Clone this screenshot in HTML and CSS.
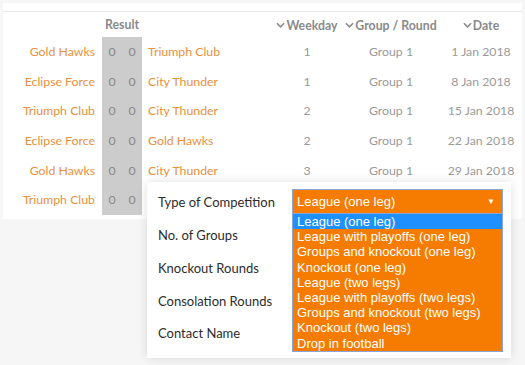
FILE: index.html
```html
<!DOCTYPE html>
<html lang="en">
<head>
    <meta charset="UTF-8">
    <title>Fixtures</title>
    <link rel="stylesheet" href="styles.css">
</head>
<body>
    <div class="card">
        <table class="fixtures">
            <colgroup>
                <col class="col-home">
                <col class="col-score">
                <col class="col-score">
                <col class="col-away">
                <col class="col-week">
                <col class="col-group">
                <col class="col-date">
            </colgroup>
            <thead>
                <tr>
                    <th></th>
                    <th colspan="2" class="result-head">Result</th>
                    <th></th>
                    <th><span class="sort"><svg viewBox="0 0 10 6" class="chev"><path d="M1 1 L5 5 L9 1"/></svg>Weekday</span></th>
                    <th><span class="sort"><svg viewBox="0 0 10 6" class="chev"><path d="M1 1 L5 5 L9 1"/></svg>Group / Round</span></th>
                    <th><span class="sort"><svg viewBox="0 0 10 6" class="chev"><path d="M1 1 L5 5 L9 1"/></svg>Date</span></th>
                </tr>
            </thead>
            <tbody>
                <tr><td class="home">Gold Hawks</td><td class="score">0</td><td class="score">0</td><td class="away">Triumph Club</td><td>1</td><td>Group 1</td><td>1 Jan 2018</td></tr>
                <tr><td class="home">Eclipse Force</td><td class="score">0</td><td class="score">0</td><td class="away">City Thunder</td><td>1</td><td>Group 1</td><td>8 Jan 2018</td></tr>
                <tr><td class="home">Triumph Club</td><td class="score">0</td><td class="score">0</td><td class="away">City Thunder</td><td>2</td><td>Group 1</td><td>15 Jan 2018</td></tr>
                <tr><td class="home">Eclipse Force</td><td class="score">0</td><td class="score">0</td><td class="away">Gold Hawks</td><td>2</td><td>Group 1</td><td>22 Jan 2018</td></tr>
                <tr><td class="home">Gold Hawks</td><td class="score">0</td><td class="score">0</td><td class="away">City Thunder</td><td>3</td><td>Group 1</td><td>29 Jan 2018</td></tr>
                <tr><td class="home">Triumph Club</td><td class="score">0</td><td class="score">0</td><td class="away"></td><td></td><td></td><td></td></tr>
            </tbody>
        </table>
    </div>

    <!-- Competition settings popup -->
    <div class="settings">
        <div class="field">
            <label>Type of Competition</label>
            <div class="select">
                <span>League (one leg)</span>
                <span class="arrow">▼</span>
            </div>
        </div>
        <div class="field"><label>No. of Groups</label></div>
        <div class="field"><label>Knockout Rounds</label></div>
        <div class="field"><label>Consolation Rounds</label></div>
        <div class="field"><label>Contact Name</label></div>

        <ul class="options">
            <li class="active">League (one leg)</li>
            <li>League with playoffs (one leg)</li>
            <li>Groups and knockout (one leg)</li>
            <li>Knockout (one leg)</li>
            <li>League (two legs)</li>
            <li>League with playoffs (two legs)</li>
            <li>Groups and knockout (two legs)</li>
            <li>Knockout (two legs)</li>
            <li>Drop in football</li>
        </ul>
    </div>
</body>
</html>
```

FILE: styles.css
```css
* {
    margin: 0;
    padding: 0;
    box-sizing: border-box;
}

body {
    font-family: Lato, "Noto Sans", sans-serif;
    background-color: #f6f6f6;
    color: #333;
    padding: 3px;
    position: relative;
    height: 365px;
    overflow: hidden;
}

/* Fixtures card */
.card {
    background: white;
    padding: 8px 0 4px;
    width: 519px;
}

.fixtures {
    width: 100%;
    border-collapse: collapse;
    table-layout: fixed;
    border-top: 1px solid #e8e8e8;
    font-size: 12.3px;
}

.col-home { width: 99px; }
.col-score { width: 20px; }
.col-away { width: 130px; }
.col-week { width: 70px; }
.col-group { width: 98px; }
.col-date { width: 82px; }

.fixtures th {
    height: 25px;
    font-weight: 700;
    color: #8a8a8a;
    text-align: center;
    font-size: 12.3px;
}

.sort {
    display: inline-flex;
    align-items: center;
    gap: 1px;
}

.chev {
    width: 9px;
    height: 6px;
    fill: none;
    stroke: #8a8a8a;
    stroke-width: 1.8;
}

.fixtures td {
    height: 29.7px;
    text-align: center;
    color: #9a9a9a;
    white-space: nowrap;
}

.fixtures td.home {
    text-align: right;
    padding-right: 7px;
    color: #e8903c;
}

.fixtures td.away {
    text-align: left;
    padding-left: 6px;
    color: #e8903c;
}

.fixtures td.score {
    background: #cccccc;
    color: #888;
}

/* Settings popup */
.settings {
    position: absolute;
    left: 147px;
    top: 182px;
    width: 364px;
    height: 176px;
    background: white;
    box-shadow: 0 0 10px rgba(0, 0, 0, 0.12);
    padding: 7px 8px 0 11px;
}

.field {
    display: flex;
    align-items: center;
    height: 32.7px;
}

.field:first-child {
    height: 25px;
    margin-bottom: 5px;
}

.field label {
    width: 134px;
    font-size: 13px;
    color: #2c2c2c;
}

.select {
    flex: 1;
    height: 25px;
    background: #f57c00;
    border: 1px solid #8aa6d6;
    color: white;
    font-family: "Liberation Sans", Arial, sans-serif;
    font-size: 13px;
    display: flex;
    align-items: center;
    justify-content: space-between;
    padding: 0 7px 0 4px;
}

.arrow {
    font-size: 8px;
}

.options {
    position: absolute;
    left: 145px;
    top: 32px;
    width: 211px;
    list-style: none;
    background: #f57c00;
    border: 1px solid #8aa6d6;
    border-top: none;
    font-family: "Liberation Sans", Arial, sans-serif;
    font-size: 13px;
    color: white;
}

.options li {
    height: 15.2px;
    line-height: 15px;
    padding-left: 4px;
}

.options li.active {
    background: #1e90ff;
}
```
